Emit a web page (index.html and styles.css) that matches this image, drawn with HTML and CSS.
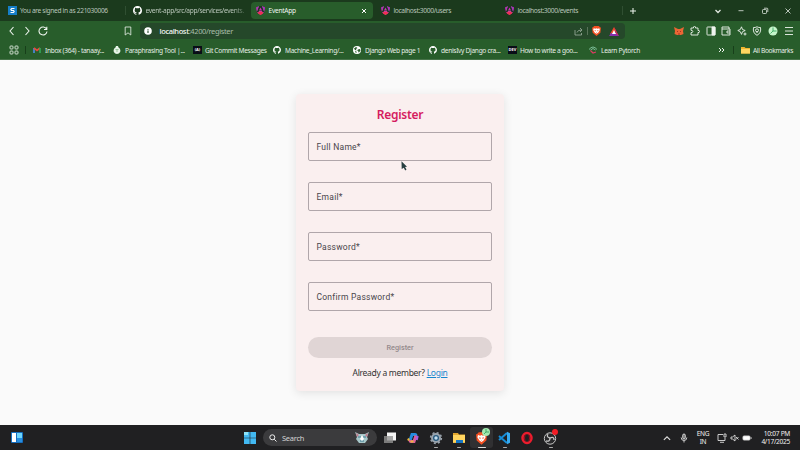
FILE: index.html
```html
<!DOCTYPE html>
<html lang="en">
<head>
<meta charset="utf-8">
<title>EventApp</title>
<link rel="stylesheet" href="styles.css">
</head>
<body>
<svg class="defs" aria-hidden="true">
  <symbol id="github" viewBox="0 0 16 16"><path fill="#fff" d="M8 0C3.58 0 0 3.58 0 8c0 3.54 2.29 6.53 5.47 7.59.4.07.55-.17.55-.38v-1.49c-2.01.37-2.53-.49-2.69-.94-.09-.23-.48-.94-.82-1.13-.28-.15-.68-.52-.01-.53.63-.01 1.08.58 1.23.82.72 1.21 1.87.87 2.33.66.07-.52.28-.87.51-1.07-1.78-.2-3.64-.89-3.64-3.95 0-.87.31-1.59.82-2.15-.08-.2-.36-1.02.08-2.12 0 0 .67-.21 2.2.82a7.6 7.6 0 0 1 4 0c1.53-1.04 2.2-.82 2.2-.82.44 1.1.16 1.92.08 2.12.51.56.82 1.27.82 2.15 0 3.07-1.87 3.75-3.65 3.95.29.25.54.73.54 1.48v2.2c0 .21.15.46.55.38A8 8 0 0 0 16 8c0-4.42-3.58-8-8-8z"/></symbol>
  <symbol id="angular" viewBox="0 0 18 18"><path fill="#d7359a" d="M9 0L1 3l1 10 7 5 7-5 1-10z"/><path fill="#7534d8" d="M9 0l8 3-1 10-4-3z"/><path fill="#1d3720" d="M6 0h6l5 13-4-1-1-2H6l-1 2-4 1z"/><path fill="#c934b6" d="M9 3l3 6H6z"/><path fill="#ef3152" d="M5 12h8l1 3-5 3-5-3z"/><path fill="#ad37b7" d="M0 3l6-3-4 11zM18 3l-6-3 4 11z"/></symbol>
  <symbol id="brave" viewBox="0 0 16 18"><path fill="#f35022" d="M4 0h8l2 2 2 1-1 9-7 6-7-6-1-9 2-1z"/><path fill="#fff" d="M3 4l3 1 2-1 2 1 3-1 1 3-3 5-3 2-3-2-3-5z"/><path fill="#f35022" d="M4 7l3 1-1 2zM12 7L9 8l1 2zM7 11h2l-1 1z"/></symbol>
  <symbol id="globe" viewBox="0 0 16 16"><circle cx="8" cy="8" r="8" fill="#fff"/><path fill="#285d2b" d="M2 5l4-3 3 2-3 2 1 3-3-1zM10 7l4-1 1 3-3 4-2-1 1-2-3-1zM4 10l3 1v3l-2-1z"/></symbol>
</svg>
<header class="tabs">
  <div class="tab first"><svg class="ico" viewBox="0 0 16 16"><rect width="16" height="16" fill="#167fc8"/><path d="M11.500 4.500H6.500L5 6l1 2h4l1 2-1.500 1.500H4.500" fill="none" stroke="#fff" stroke-width="2"/></svg><span class="label">You are signed in as 221030006</span></div>
  <div class="tab second"><svg class="ico"><use href="#github"/></svg><span class="label wide">event-app/src/app/services/events.</span></div>
  <div class="tab active"><svg class="ico"><use href="#angular"/></svg><span class="label">EventApp</span><svg class="close" viewBox="0 0 6 6"><path d="M1 1l4 4M5 1L1 5"/></svg></div>
  <div class="tab users"><svg class="ico"><use href="#angular"/></svg><span class="label">localhost:3000/users</span></div>
  <div class="tab events"><svg class="ico"><use href="#angular"/></svg><span class="label">localhost:3000/events</span></div>
  <svg class="plus" viewBox="0 0 6 6"><path d="M3 0v6M0 3h6"/></svg>
  <div class="window">
    <svg viewBox="0 0 8 8"><path d="M1.500 3l2.500 2.500L6.500 3" stroke-width="1.300"/></svg>
    <svg viewBox="0 0 8 8"><path d="M1.500 3.700h5"/></svg>
    <svg viewBox="0 0 8 8"><rect x="1.500" y="2.500" width="4" height="4" rx=".8"/><path d="M3 1.200h3q.8 0 .8.800v3"/></svg>
    <svg viewBox="0 0 8 8"><path d="M1.500 1.500l5 5m0-5l-5 5"/></svg>
  </div>
</header>
<nav class="toolbar">
  <svg class="arrow" viewBox="0 0 8 10"><path d="M5.500 1L2 5l3.500 4"/></svg>
  <svg class="arrow" viewBox="0 0 8 10"><path d="M2.500 1L6 5 2.500 9"/></svg>
  <svg class="reload" viewBox="0 0 10 10"><path d="M8.500 3A4 4 0 1 0 9 5.500M8.800.8v2.700H6"/></svg>
  <svg class="mark" viewBox="0 0 8 10"><path d="M1.200 1h5.600v8L4 6.800 1.200 9z"/></svg>
  <div class="address">
    <svg class="info" viewBox="0 0 8 8"><circle cx="4" cy="4" r="3.800" fill="#fff" stroke="none"/><path d="M4 2v.8M4 3.500V6" stroke="#244628"/></svg>
    <span class="url"><b>localhost</b>:4200/register</span>
    <svg class="share" viewBox="0 0 9 9"><path d="M1 3v5h6.500V6M3 5.500Q3.500 3 7.500 3M6 1l2 2-2 2"/></svg>
    <i></i>
    <svg class="shield"><use href="#brave"/></svg>
    <svg class="bat" viewBox="0 0 10 9"><path fill="#f04928" d="M5 0l2.500 4.500L5 5 3 7H1z"/><path fill="#862eae" d="M0 9l2-3h6l2 3z"/><path fill="#d02760" d="M5 0l5 9-3-2z"/><path fill="#fff" d="M5 3l2 4H3z"/></svg>
  </div>
  <div class="extensions">
    <svg viewBox="0 0 10 10"><path fill="#eb6635" stroke="none" d="M0 1l4 2h2l4-2-1 4 .5 3L7 9H3L.5 8 1 5z"/><path stroke="#9d2c24" d="M3 5.500h1M6 5.500h1M4 8h2"/></svg>
    <svg viewBox="0 0 10 10"><path d="M1 2h2.500q-.5-1.500 1-1.500T5.500 2H8v2.500q1.500-.5 1.500 1T8 6.500V9H1V6.700q1.800 0 1.800-1.200T1 4.300z"/></svg>
    <svg viewBox="0 0 10 10"><rect x="1" y="1" width="8" height="8" rx=".5"/><path fill="#eef4ee" d="M6 1h3v8H6z"/></svg>
    <svg viewBox="0 0 10 10"><path d="M8 3V1H1v8h8V3H1M9 5H6v2h3"/></svg>
    <svg viewBox="0 0 10 10"><path d="M4.500.8l1 2.700 2.700 1-2.700 1.200-1 2.700-1.200-2.700L.8 4.500l2.500-1zM8 6.500v3M6.500 8h3"/></svg>
    <svg viewBox="0 0 10 10"><path d="M5 .8q2 1 3.500.7Q9.500 7 5 9.300.5 7 1.500 1.500 3 1.800 5 .8z"/><circle cx="5" cy="4.300" r="1.500"/><path d="M5 5v2"/></svg>
    <svg viewBox="0 0 10 10"><circle cx="5" cy="5" r="4.500" fill="#c7f5cc" stroke="none"/><path stroke="#39a960" d="M5 1.500v3.500h3.500M5 5L2.500 7.500"/></svg>
    <svg viewBox="0 0 10 10"><path d="M1 1.500h8M1 5h8M1 8.500h8"/></svg>
  </div>
</nav>
<nav class="bookmarks">
  <svg class="apps" viewBox="0 0 10 10"><rect x="1" y="1" width="3" height="3" rx=".8"/><rect x="6" y="1" width="3" height="3" rx=".8"/><rect x="1" y="6" width="3" height="3" rx=".8"/><rect x="6" y="6" width="3" height="3" rx=".8"/></svg>
  <i></i>
  <div class="bm"><svg viewBox="0 0 8 8"><path d="M1 7V2" stroke="#4d8be8" stroke-width="1.600"/><path d="M1 2l3 2.500L7 2" fill="none" stroke="#e64b3b" stroke-width="1.700"/><path d="M7 7V2" stroke="#31a85b" stroke-width="1.600"/></svg><span>Inbox (364) - tanaay...</span></div>
  <div class="bm"><svg viewBox="0 0 8 8"><path fill="#e7f5e8" d="M3 0h2l.5 1.500Q8 3 7.200 6 6 8 4 8T.8 6Q0 3 2.500 1.500z"/><path d="M2.500 3.500h3M3 5h2" stroke="#64aa69" stroke-width=".6"/></svg><span>Paraphrasing Tool |...</span></div>
  <div class="bm"><span class="sq">(A)</span><span>Git Commit Messages</span></div>
  <div class="bm"><svg><use href="#github"/></svg><span>Machine_Learning/...</span></div>
  <div class="bm django"><svg><use href="#globe"/></svg><span>Django Web page 1</span></div>
  <div class="bm denis"><svg><use href="#github"/></svg><span>denisIvy Django cra...</span></div>
  <div class="bm dev"><span class="sq">DEV</span><span>How to write a goo...</span></div>
  <div class="bm torch"><svg viewBox="0 0 8 8"><path d="M0 3.500q4-5 8 0M1.500 4q2.500-3 5 0" fill="none" stroke="#7cbd96"/><path d="M1.500 4.500L4 7l3-1" fill="none" stroke="#dc3c62" stroke-width="1.200"/></svg><span>Learn Pytorch</span></div>
  <svg class="more" viewBox="0 0 7 6"><path d="M1 1l2 2-2 2M4 1l2 2-2 2"/></svg>
  <i></i>
  <svg class="folder" viewBox="0 0 9 8"><path fill="#eeb52f" d="M0 1h3.500l1 1H9v5.500H0z"/><path fill="#ffd561" d="M0 3h9v4.500H0z"/></svg>
  <span class="all">All Bookmarks</span>
</nav>
<main>
  <form class="card">
    <h1>Register</h1>
    <div class="field">Full Name*</div>
    <div class="field">Email*</div>
    <div class="field">Password*</div>
    <div class="field">Confirm Password*</div>
    <button type="button" disabled>Register</button>
    <p>Already a member? <a href="#">Login</a></p>
  </form>
  <svg class="cursor" viewBox="0 0 7 10"><path fill="#263f41" d="M.5.300L6 5.800 4 6l1.500 2.600-1.300.8L2.800 6.700.7 8z"/></svg>
</main>
<footer>
  <svg class="widget" viewBox="0 0 12 11"><rect width="12" height="11" rx="1" fill="#166ebf"/><path fill="#fff" d="M1 1h4v9H1z"/><path fill="#6dd5fb" d="M6 1h5v5H6z"/><path fill="#278edf" d="M6 6h5v4H6z"/></svg>
  <svg class="start" viewBox="0 0 12 12"><path fill="#42b9f2" d="M0 0h5.700v5.700H0zM6.300 0H12v5.700H6.300zM0 6.300h5.700V12H0zM6.300 6.300H12V12H6.300z"/><path fill="#8de4f9" d="M0 0h4v3H0z"/></svg>
  <div class="search"><svg class="lens" viewBox="0 0 8 8"><circle cx="3.300" cy="3.300" r="2.500"/><path d="M5.200 5.200L7.500 7.500"/></svg><span>Search</span><svg class="cat" viewBox="0 0 14 11"><path fill="#a7c8c9" d="M0 0l4 2h6l4-2-2 5 1 2-3 4H4L1 7l1-2z"/><path fill="#c4798b" d="M1 1l3 2-2 2zM13 1l-3 2 2 2z"/><path stroke="#3c7992" d="M3 5h3M8 5h3M5 9h4"/><path fill="#fff" d="M7 3l2 4-2 2-2-2z"/></svg></div>
  <div class="programs">
    <div><svg viewBox="0 0 14 14"><rect x="4" y="1.500" width="9" height="8" fill="#f5f5f5"/><rect x="1" y="5" width="9" height="7" fill="#929292" opacity=".8"/></svg></div>
    <div><svg viewBox="0 0 14 14"><path d="M4 9.500L6 3.500h3q1 0 1 1.500" fill="none" stroke="#268de1" stroke-width="3"/><path d="M10 4.500L8 10.500H5q-1 0-1-1.500" fill="none" stroke="#dd5f9a" stroke-width="3"/><path d="M3 7.500l-1 2M4.500 10.500h3" stroke="#e8b73a" stroke-width="2"/><path d="M11.500 5l-1 4" stroke="#ac5ee0" stroke-width="2.500"/></svg></div>
    <div class="on"><svg viewBox="0 0 14 14"><circle cx="7" cy="7" r="5" fill="#9aa4ae"/><circle cx="7" cy="7" r="5.400" fill="none" stroke="#9aa4ae" stroke-width="1.500" stroke-dasharray="2 2.240"/><circle cx="7" cy="7" r="3" fill="#26587e"/><circle cx="7" cy="7" r="1.700" fill="#c1def0"/></svg></div>
    <div class="on"><svg viewBox="0 0 14 14"><path fill="#e2a52d" d="M1 2h5l1 1.500h6V12H1z"/><path fill="#ffd45f" d="M1 4h12v7.500H1z"/><path fill="#1676c5" d="M4 9h7v3H4z"/></svg></div>
    <div class="on current"><svg viewBox="0 0 14 14"><use href="#brave" x="1" y="1" width="11" height="13"/></svg><span class="badge"><svg viewBox="0 0 8 8"><circle cx="4" cy="4" r="4" fill="#a5e9b0"/><path d="M4 1v3h3M4 4L2 6" fill="none" stroke="#2e9a58" stroke-width=".8"/></svg></span></div>
    <div class="on"><svg viewBox="0 0 14 14"><path d="M10 2L2 9M2 5l8 7" stroke="#168bd5" stroke-width="2"/><path fill="#35a9ef" d="M10 .8l3 1.500v9.400l-3 1.500z"/></svg></div>
    <div><svg viewBox="0 0 14 14"><ellipse cx="7" cy="7" rx="4.500" ry="5" fill="none" stroke="#ec1c2d" stroke-width="2.500"/><path d="M5 4q-1 3 0 6M9 4q1 3 0 6" stroke="#a50c20" fill="none"/></svg></div>
    <div class="on"><svg viewBox="0 0 14 14"><circle cx="7" cy="7.500" r="5.700" fill="#29292b" stroke="#c7c7c7"/><path d="M7 7Q3 6 5 3M7 7q4-2 4 2M7 7q0 4-4 3" fill="none" stroke="#c7c7c7" stroke-width="1.300"/></svg><span class="badge red"></span></div>
  </div>
  <div class="tray">
    <svg class="up" viewBox="0 0 8 8"><path d="M1.500 5.500L4 3l2.500 2.500"/></svg>
    <svg class="mic" viewBox="0 0 8 10"><rect x="2.700" y="1" width="2.600" height="5" rx="1.300" fill="#777"/><path d="M1.200 4.500q0 3 2.800 3t2.800-3M4 7.500v2"/></svg>
    <div class="lang">ENG<br>IN</div>
    <svg class="net" viewBox="0 0 10 10"><path d="M6 1.500H1v6h7V5M3 9.300h4M7 1h2v3H7z"/></svg>
    <svg class="sound" viewBox="0 0 10 10"><path d="M1 4h1.500L5 2v6L2.500 6H1zM6 4l2.500 2.500M8.500 4L6 6.500"/></svg>
    <svg class="battery" viewBox="0 0 10 10"><rect x="1" y="3" width="7" height="4" rx="1" fill="#fff"/><path d="M9.200 4.300v1.500"/></svg>
    <div class="clock">10:07 PM<br>4/17/2025</div>
  </div>
</footer>
</body>
</html>
```

FILE: styles.css
```css
* { box-sizing: border-box; }
body { margin: 0; width: 800px; height: 450px; overflow: hidden; display: flex; flex-direction: column; font-family: "Noto Sans", sans-serif; font-size: 6.6px; letter-spacing: -.2px; color: #e5eee5; white-space: nowrap; }
.defs { position: absolute; width: 0; height: 0; }
svg { display: block; flex: none; fill: none; }
.tabs { height: 21px; flex: none; background: #1b3a1d; display: flex; align-items: center; }
.tab { height: 17px; display: flex; align-items: center; color: #b9c6ba; flex: none; }
.tab .ico { width: 9px; height: 9px; margin-right: 3.500px; }
.label { line-height: 10px; }
.first { width: 125px; padding-left: 7.500px; letter-spacing: -.32px; }
.second { width: 126px; padding-left: 7px; border-left: 1px solid transparent; border-image: linear-gradient(transparent 28%, #304f32 28% 72%, transparent 72%) 1; }
.wide { width: 99px; letter-spacing: -.29px; -webkit-mask-image: linear-gradient(90deg, #000 88%, rgba(0,0,0,.2)); mask-image: linear-gradient(90deg, #000 88%, rgba(0,0,0,.2)); }
.active { width: 122px; padding-left: 5px; background: #285d2b; border-radius: 4px; color: #f2f7f2; letter-spacing: -.27px; }
.close { width: 6px; height: 6px; margin-left: auto; margin-right: 6px; stroke: #fff; stroke-width: 1; }
.users { width: 125px; padding-left: 8px; letter-spacing: -.37px; }
.events { width: 125px; padding-left: 7px; letter-spacing: -.37px; border-right: 1px solid transparent; border-image: linear-gradient(transparent 28%, #304f32 28% 72%, transparent 72%) 1; }
.users, .events { font-size: 6.700px; }
.plus { width: 6px; height: 6px; margin-left: 7px; stroke: #eef4ee; stroke-width: 1; }
.window { display: flex; gap: 15.500px; margin-left: auto; padding-right: 8px; }
.window svg { width: 8px; height: 8px; stroke: #e2e9e2; stroke-width: .8; }
.toolbar { height: 20px; flex: none; background: #285d2b; display: flex; align-items: center; padding-left: 8px; stroke: #eef4ee; stroke-width: 1.100; }
.arrow { width: 8px; height: 10px; margin-right: 7px; }
.reload { width: 10px; height: 10px; }
.mark { width: 8px; height: 10px; margin-left: 76px; margin-right: 8px; stroke-width: .8; }
.address { width: 485px; height: 16px; border-radius: 4px; background: #25482a; display: flex; align-items: center; padding-left: 4px; }
.info { width: 8px; height: 8px; margin-right: 7.500px; }
.url { font-size: 7.500px; letter-spacing: -.36px; color: #a9bda9; width: 414px; line-height: 12px; stroke: none; }
.url b { color: #f5f8f5; font-weight: 500; }
.share { width: 9px; height: 9px; opacity: .6; stroke-width: .8; }
.address i { width: 1px; height: 8px; background: #587359; margin: 0 4.500px 0 4px; }
.shield { width: 9px; height: 10px; stroke: none; }
.bat { width: 10px; height: 9px; stroke: none; margin-left: 8px; }
.extensions { display: flex; gap: 5.600px; margin-left: auto; padding-right: 6.500px; }
.extensions svg { width: 10px; height: 10px; stroke-width: .9; }
.bookmarks { height: 19px; flex: none; background: #285d2b; border-bottom: 1px solid #477349; display: flex; align-items: center; padding-left: 9px; }
.apps { width: 10px; height: 10px; stroke: #e4eee4; stroke-width: .9; }
.bookmarks > i { width: 1px; height: 8px; background: #173f1a; margin: 0 7px 0 6px; }
.bm { width: 80px; display: flex; align-items: center; flex: none; letter-spacing: -.31px; }
.bm svg { width: 8px; height: 8px; margin-right: 4px; }
.sq { width: 9px; height: 8px; background: #090d17; color: #fff; font-size: 4px; line-height: 8px; text-align: center; margin-right: 3px; font-weight: 700; letter-spacing: 0; }
.django { width: 76px; }
.denis { width: 79px; }
.dev { width: 81px; }
.torch { width: 58px; }
.more { width: 7px; height: 6px; margin-left: 71px; stroke: #eef4ee; stroke-width: 1; }
.bookmarks > .more + i { margin-left: 8px; margin-right: 7px; }
.folder { width: 9px; height: 8px; margin-right: 3px; }
.all { letter-spacing: -.34px; }
main { height: 365px; flex: none; background: #fafafa; padding-top: 34px; position: relative; letter-spacing: 0; }
.card { width: 208px; height: 297px; margin: 0 auto; padding: 13px 12px 0; background: #faefef; border-radius: 4px; box-shadow: 0 2px 10px rgba(0,0,0,.1); color: #49454b; display: flex; flex-direction: column; }
h1 { margin: 0 0 9px; font-size: 12px; line-height: 16px; font-weight: 600; letter-spacing: -.3px; color: #d51b60; text-align: center; }
.field { height: 29px; flex: none; margin-bottom: 21px; border: 1px solid #b0a6aa; border-radius: 2px; padding-left: 7.500px; line-height: 28px; font-family: Roboto, sans-serif; font-size: 8.500px; letter-spacing: .24px; }
button { height: 21px; margin: 5px 0 0; border: 0; padding: 0; border-radius: 11px; background: #e0d5d5; color: #94898c; font: 500 7.300px/21px Roboto, sans-serif; }
.card p { margin: 9px 0 0; font-size: 8.500px; letter-spacing: -.29px; line-height: 12px; text-align: center; color: #333; }
.card a { color: #1686cf; }
.cursor { position: absolute; left: 400.500px; top: 101px; width: 7px; height: 10px; }
footer { height: 25px; flex: none; background: #202022; display: flex; align-items: center; color: #f0f0f0; }
.widget { width: 12px; height: 11px; margin-left: 11px; }
.start { width: 12px; height: 12px; margin-left: 220.500px; }
.search { width: 114px; height: 17px; border-radius: 9px; background: #3b3b3d; margin-left: 7.500px; padding: 0 8px 0 6px; display: flex; align-items: center; font-size: 7.500px; letter-spacing: -.25px; color: #d4d4d4; }
.lens { width: 8px; height: 8px; margin-right: 5px; stroke: #eee; stroke-width: 1; }
.cat { width: 14px; height: 11px; margin-left: auto; }
.programs { display: flex; margin-left: 1.500px; }
.programs > div { width: 22.900px; height: 21px; display: flex; align-items: center; justify-content: center; position: relative; }
.programs > div > svg { width: 14px; height: 14px; }
.programs .on::after { content: ""; position: absolute; bottom: 0; left: 10px; width: 4px; height: 1px; background: #aaa; border-radius: 1px; }
.programs .current { background: #303032; border-radius: 3px; }
.programs .current::after { left: 8px; width: 8px; background: #ddd; }
.badge { position: absolute; left: 12px; top: 1px; width: 8px; height: 8px; }
.red { left: 13px; top: 2px; width: 6px; height: 6px; border-radius: 50%; background: #f21c25; }
.tray { margin-left: auto; display: flex; align-items: center; padding-right: 10px; font-size: 6.600px; letter-spacing: -.3px; line-height: 8px; }
.tray svg { width: 10px; height: 10px; stroke: #ddd; stroke-width: .9; }
.up { margin-right: 7px; }
.lang { width: 18px; text-align: center; margin: 0 5px; }
.net { margin-right: 3px; }
.sound { margin-right: 2px; }
.battery { margin-right: 7px; }
.clock { width: 31px; text-align: right; }
```
